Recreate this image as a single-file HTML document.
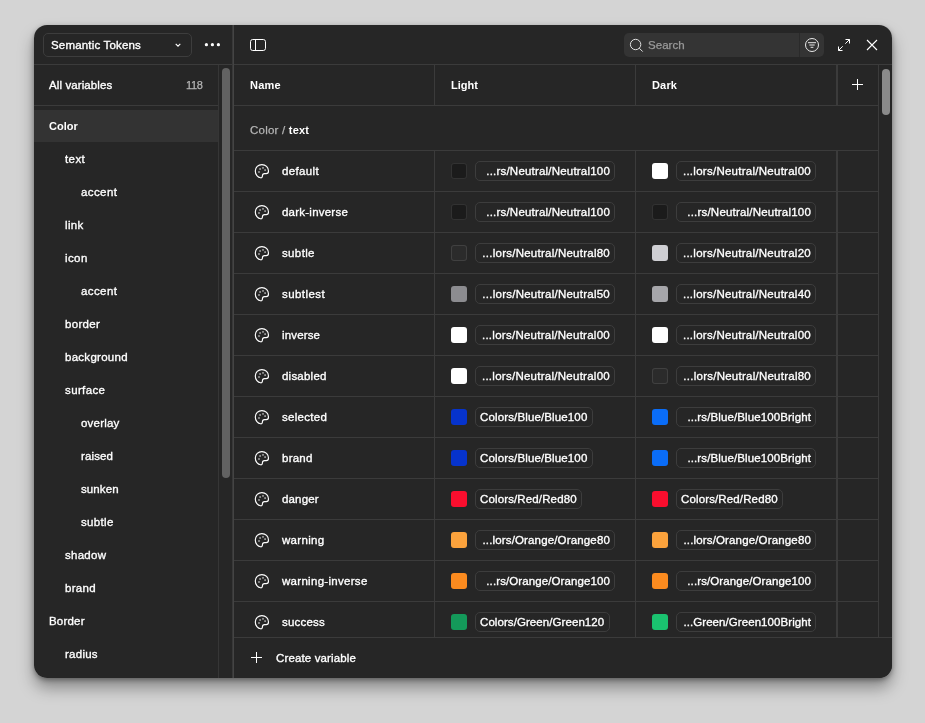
<!DOCTYPE html>
<html lang="en"><head><meta charset="utf-8"><title>Variables</title>
<style>
*{box-sizing:border-box;margin:0;padding:0}
html,body{width:925px;height:723px;overflow:hidden}
body{background:#d4d4d4;font-family:"Liberation Sans",Arial,sans-serif;font-size:11.5px;color:#fff;position:relative;-webkit-font-smoothing:antialiased}
.modal{position:absolute;left:34px;top:25px;width:858px;height:653px;background:#262626;border-radius:13px;overflow:hidden;will-change:transform}
.shadow{position:absolute;left:34px;top:25px;width:858px;height:653px;border-radius:13px;box-shadow:0 2px 5px rgba(0,0,0,.35),0 10px 16px rgba(0,0,0,.35);}
.abs{position:absolute}
.hl{position:absolute;height:1px;background:#3b3b3b}
.vl{position:absolute;width:1px;background:#3b3b3b}
.t{position:absolute;white-space:nowrap;line-height:16px;height:16px}
.m{font-weight:400;-webkit-text-stroke:.33px #fff}
.b{font-weight:700;font-size:11px}
.sel{position:absolute;left:9px;top:8px;width:149px;height:24px;border:1px solid #3d3d3d;border-radius:5px}
.search{position:absolute;left:590px;top:8px;width:200px;height:24px;background:#343434;border-radius:5px}
.srow{position:absolute;left:0;width:184px;height:32px}
.srow.on{background:#333333}
.row{position:absolute;left:200px;width:644px;height:41px;border-bottom:1px solid #3b3b3b}
.pal{position:absolute;left:20px;top:12px}
.sw{position:absolute;top:12px;width:16px;height:16px;border-radius:3px}
.sw.n{box-shadow:inset 0 0 0 1px rgba(255,255,255,.1)}
.chip{position:absolute;top:10px;height:20px;border:1px solid #3d3d3d;border-radius:5px;line-height:18px;white-space:nowrap;overflow:hidden;text-align:right;padding:0 4px 0 0}
.chip.full{text-align:left;padding:0 0 0 4px}
</style></head><body>
<div class="shadow"></div>
<div class="modal">

<div class="sel"></div>
<div class="t m" id="t_sem" style="left:17px;top:12px;letter-spacing:0.173px">Semantic Tokens</div>
<svg class="abs" style="left:140px;top:17px" width="8" height="6" viewBox="0 0 8 6"><path d="M1.700 1.800L4 4.100L6.300 1.800" fill="none" stroke="#fff" stroke-width="1.100"/></svg>
<svg class="abs" style="left:169px;top:17px" width="18" height="6" viewBox="0 0 18 6"><circle cx="3.400" cy="2.700" r="1.600" fill="#fff"/><circle cx="9.400" cy="2.700" r="1.600" fill="#fff"/><circle cx="15.400" cy="2.700" r="1.600" fill="#fff"/></svg>
<svg class="abs" style="left:215px;top:13px" width="18" height="14" viewBox="0 0 18 14"><rect x="1.500" y="1.500" width="15" height="11" rx="2.200" fill="none" stroke="#fff" stroke-width="1"/><path d="M6.500 1.500V12.500" stroke="#fff" stroke-width="1"/></svg>
<div class="search"><div class="vl" style="left:175px;top:0;height:24px;background:#2a2a2a"></div></div>
<svg class="abs" style="left:594px;top:12px" width="16" height="16" viewBox="0 0 16 16"><circle cx="7.600" cy="7.500" r="5.200" fill="none" stroke="#e0e0e0" stroke-width="1"/><path d="M11.300 11.200L14.700 14.600" stroke="#e0e0e0" stroke-width="1"/></svg>
<div class="t" id="t_search" style="left:614px;top:12px;color:#9a9a9a;-webkit-text-stroke:.25px #9a9a9a;letter-spacing:0.033px">Search</div>
<svg class="abs" style="left:770px;top:12px" width="16" height="16" viewBox="0 0 16 16"><circle cx="8" cy="8" r="6.500" fill="none" stroke="#e8e8e8" stroke-width="1"/><path d="M4 5.700H12M5.300 8H10.700M6.600 10.300H9.400" stroke="#e8e8e8" stroke-width="1"/></svg>
<svg class="abs" style="left:802px;top:12px" width="16" height="16" viewBox="0 0 16 16"><path d="M9.500 2.500H13.500V6.500M13.500 2.500L9.300 6.700M6.500 13.500H2.500V9.500M2.500 13.500L6.700 9.300" fill="none" stroke="#fff" stroke-width="1"/></svg>
<svg class="abs" style="left:830px;top:12px" width="16" height="16" viewBox="0 0 16 16"><path d="M3 3L13 13M13 3L3 13" stroke="#fff" stroke-width="1.100"/></svg>
<div class="hl" style="left:0;top:39px;width:858px"></div>
<div class="hl" style="left:0;top:80px;width:184px"></div>
<div class="vl" style="left:184px;top:40px;height:613px;background:#363636"></div>
<div class="vl" style="left:198px;top:0;height:653px;background:#383838"></div>
<div class="vl" style="left:199px;top:0;height:653px;background:#444"></div>
<div class="abs" style="left:188px;top:43px;width:8px;height:410px;border-radius:4px;background:#626262"></div>
<div class="t m" id="t_all" style="left:15px;top:52px;letter-spacing:0.1px">All variables</div>
<div class="t" id="t_118" style="left:152px;top:52px;font-size:11px;color:#b5b5b5;-webkit-text-stroke:.25px #b5b5b5;letter-spacing:-0.373px">118</div>
<div class="srow on" style="top:85px"><div class="t b" id="s0" style="left:15px;top:8px;letter-spacing:0.041px">Color</div></div>
<div class="srow" style="top:118px"><div class="t m" id="s1" style="left:31px;top:8px;letter-spacing:0.418px">text</div></div>
<div class="srow" style="top:151px"><div class="t m" id="s2" style="left:47px;top:8px;letter-spacing:0.402px">accent</div></div>
<div class="srow" style="top:184px"><div class="t m" id="s3" style="left:31px;top:8px;letter-spacing:0.345px">link</div></div>
<div class="srow" style="top:217px"><div class="t m" id="s4" style="left:31px;top:8px;letter-spacing:0.397px">icon</div></div>
<div class="srow" style="top:250px"><div class="t m" id="s5" style="left:47px;top:8px;letter-spacing:0.402px">accent</div></div>
<div class="srow" style="top:283px"><div class="t m" id="s6" style="left:31px;top:8px;letter-spacing:0.33px">border</div></div>
<div class="srow" style="top:316px"><div class="t m" id="s7" style="left:31px;top:8px;letter-spacing:0.277px">background</div></div>
<div class="srow" style="top:349px"><div class="t m" id="s8" style="left:31px;top:8px;letter-spacing:0.38px">surface</div></div>
<div class="srow" style="top:382px"><div class="t m" id="s9" style="left:47px;top:8px;letter-spacing:0.204px">overlay</div></div>
<div class="srow" style="top:415px"><div class="t m" id="s10" style="left:47px;top:8px;letter-spacing:0.134px">raised</div></div>
<div class="srow" style="top:448px"><div class="t m" id="s11" style="left:47px;top:8px;letter-spacing:0.101px">sunken</div></div>
<div class="srow" style="top:481px"><div class="t m" id="s12" style="left:47px;top:8px;letter-spacing:0.342px">subtle</div></div>
<div class="srow" style="top:514px"><div class="t m" id="s13" style="left:31px;top:8px;letter-spacing:0.272px">shadow</div></div>
<div class="srow" style="top:547px"><div class="t m" id="s14" style="left:31px;top:8px;letter-spacing:0.32px">brand</div></div>
<div class="srow" style="top:580px"><div class="t m" id="s15" style="left:15px;top:8px;letter-spacing:0.194px">Border</div></div>
<div class="srow" style="top:613px"><div class="t m" id="s16" style="left:31px;top:8px;letter-spacing:0.254px">radius</div></div>
<div class="hl" style="left:200px;top:80px;width:644px"></div>
<div class="t b" id="t_name" style="left:216px;top:52px;letter-spacing:0.244px">Name</div>
<div class="t b" id="t_light" style="left:417px;top:52px;letter-spacing:0.027px">Light</div>
<div class="t b" id="t_dark" style="left:618px;top:52px;letter-spacing:0.177px">Dark</div>
<svg class="abs" style="left:816px;top:52px" width="16" height="16" viewBox="0 0 16 16"><path d="M2 7.500H13M7.500 2V13" stroke="#fff" stroke-width="1"/></svg>
<div class="hl" style="left:200px;top:125px;width:644px"></div>
<div class="t" id="t_grp" style="left:216px;top:97px;letter-spacing:0.214px"><span style="color:#b5b5b5;-webkit-text-stroke:.25px #b5b5b5">Color / </span><span class="b">text</span></div>
<div class="row" style="top:126px"><svg class="pal" width="16" height="16" viewBox="0 0 16 16"><path d="M7.900 1.600C4.200 1.600 1.300 4.400 1.300 8c0 3.600 2.500 6.700 5.300 6.800 1.200.05 1.800-.8 1.800-1.800 0-1.500.8-2.400 2.100-2.400h1.700c1.400 0 2.300-1.100 2.300-2.600C14.500 4.400 11.600 1.600 7.900 1.600Z" fill="none" stroke="#fff" stroke-width="1.150"/><rect x="5.300" y="5.200" width="1.600" height="1.600" fill="#b0b0b0"/><rect x="8.200" y="4.100" width="1.600" height="1.600" fill="#b0b0b0"/><rect x="10.300" y="6.300" width="1.600" height="1.600" fill="#b0b0b0"/><rect x="4.200" y="8.200" width="1.600" height="1.600" fill="#b0b0b0"/></svg><div class="t m" id="r0" style="left:48px;top:12px;letter-spacing:0.361px">default</div>
<div class="sw n" style="left:217px;background:#1b1b1b"></div><div class="chip m" id="c0_0" style="left:241px;width:140px;letter-spacing:0.2px"><span>...rs/Neutral/Neutral100</span></div>
<div class="sw" style="left:418px;background:#ffffff"></div><div class="chip m" id="c0_1" style="left:442px;width:140px;letter-spacing:0.264px"><span>...lors/Neutral/Neutral00</span></div>
</div>
<div class="row" style="top:167px"><svg class="pal" width="16" height="16" viewBox="0 0 16 16"><path d="M7.900 1.600C4.200 1.600 1.300 4.400 1.300 8c0 3.600 2.500 6.700 5.300 6.800 1.200.05 1.800-.8 1.800-1.800 0-1.500.8-2.400 2.100-2.400h1.700c1.400 0 2.300-1.100 2.300-2.600C14.500 4.400 11.600 1.600 7.900 1.600Z" fill="none" stroke="#fff" stroke-width="1.150"/><rect x="5.300" y="5.200" width="1.600" height="1.600" fill="#b0b0b0"/><rect x="8.200" y="4.100" width="1.600" height="1.600" fill="#b0b0b0"/><rect x="10.300" y="6.300" width="1.600" height="1.600" fill="#b0b0b0"/><rect x="4.200" y="8.200" width="1.600" height="1.600" fill="#b0b0b0"/></svg><div class="t m" id="r1" style="left:48px;top:12px;letter-spacing:0.229px">dark-inverse</div>
<div class="sw n" style="left:217px;background:#1b1b1b"></div><div class="chip m" id="c1_0" style="left:241px;width:140px;letter-spacing:0.2px"><span>...rs/Neutral/Neutral100</span></div>
<div class="sw n" style="left:418px;background:#1b1b1b"></div><div class="chip m" id="c1_1" style="left:442px;width:140px;letter-spacing:0.2px"><span>...rs/Neutral/Neutral100</span></div>
</div>
<div class="row" style="top:208px"><svg class="pal" width="16" height="16" viewBox="0 0 16 16"><path d="M7.900 1.600C4.200 1.600 1.300 4.400 1.300 8c0 3.600 2.500 6.700 5.300 6.800 1.200.05 1.800-.8 1.800-1.800 0-1.500.8-2.400 2.100-2.400h1.700c1.400 0 2.300-1.100 2.300-2.600C14.500 4.400 11.600 1.600 7.900 1.600Z" fill="none" stroke="#fff" stroke-width="1.150"/><rect x="5.300" y="5.200" width="1.600" height="1.600" fill="#b0b0b0"/><rect x="8.200" y="4.100" width="1.600" height="1.600" fill="#b0b0b0"/><rect x="10.300" y="6.300" width="1.600" height="1.600" fill="#b0b0b0"/><rect x="4.200" y="8.200" width="1.600" height="1.600" fill="#b0b0b0"/></svg><div class="t m" id="r2" style="left:48px;top:12px;letter-spacing:0.362px">subtle</div>
<div class="sw n" style="left:217px;background:#2b2b2b"></div><div class="chip m" id="c2_0" style="left:241px;width:140px;letter-spacing:0.248px"><span>...lors/Neutral/Neutral80</span></div>
<div class="sw" style="left:418px;background:#cfcfd3"></div><div class="chip m" id="c2_1" style="left:442px;width:140px;letter-spacing:0.264px"><span>...lors/Neutral/Neutral20</span></div>
</div>
<div class="row" style="top:249px"><svg class="pal" width="16" height="16" viewBox="0 0 16 16"><path d="M7.900 1.600C4.200 1.600 1.300 4.400 1.300 8c0 3.600 2.500 6.700 5.300 6.800 1.200.05 1.800-.8 1.800-1.800 0-1.500.8-2.400 2.100-2.400h1.700c1.400 0 2.300-1.100 2.300-2.600C14.500 4.400 11.600 1.600 7.900 1.600Z" fill="none" stroke="#fff" stroke-width="1.150"/><rect x="5.300" y="5.200" width="1.600" height="1.600" fill="#b0b0b0"/><rect x="8.200" y="4.100" width="1.600" height="1.600" fill="#b0b0b0"/><rect x="10.300" y="6.300" width="1.600" height="1.600" fill="#b0b0b0"/><rect x="4.200" y="8.200" width="1.600" height="1.600" fill="#b0b0b0"/></svg><div class="t m" id="r3" style="left:48px;top:12px;letter-spacing:0.437px">subtlest</div>
<div class="sw" style="left:217px;background:#8c8c90"></div><div class="chip m" id="c3_0" style="left:241px;width:140px;letter-spacing:0.248px"><span>...lors/Neutral/Neutral50</span></div>
<div class="sw" style="left:418px;background:#a6a6aa"></div><div class="chip m" id="c3_1" style="left:442px;width:140px;letter-spacing:0.264px"><span>...lors/Neutral/Neutral40</span></div>
</div>
<div class="row" style="top:290px"><svg class="pal" width="16" height="16" viewBox="0 0 16 16"><path d="M7.900 1.600C4.200 1.600 1.300 4.400 1.300 8c0 3.600 2.500 6.700 5.300 6.800 1.200.05 1.800-.8 1.800-1.800 0-1.500.8-2.400 2.100-2.400h1.700c1.400 0 2.300-1.100 2.300-2.600C14.500 4.400 11.600 1.600 7.900 1.600Z" fill="none" stroke="#fff" stroke-width="1.150"/><rect x="5.300" y="5.200" width="1.600" height="1.600" fill="#b0b0b0"/><rect x="8.200" y="4.100" width="1.600" height="1.600" fill="#b0b0b0"/><rect x="10.300" y="6.300" width="1.600" height="1.600" fill="#b0b0b0"/><rect x="4.200" y="8.200" width="1.600" height="1.600" fill="#b0b0b0"/></svg><div class="t m" id="r4" style="left:48px;top:12px;letter-spacing:0.154px">inverse</div>
<div class="sw" style="left:217px;background:#ffffff"></div><div class="chip m" id="c4_0" style="left:241px;width:140px;letter-spacing:0.264px"><span>...lors/Neutral/Neutral00</span></div>
<div class="sw" style="left:418px;background:#ffffff"></div><div class="chip m" id="c4_1" style="left:442px;width:140px;letter-spacing:0.264px"><span>...lors/Neutral/Neutral00</span></div>
</div>
<div class="row" style="top:331px"><svg class="pal" width="16" height="16" viewBox="0 0 16 16"><path d="M7.900 1.600C4.200 1.600 1.300 4.400 1.300 8c0 3.600 2.500 6.700 5.300 6.800 1.200.05 1.800-.8 1.800-1.800 0-1.500.8-2.400 2.100-2.400h1.700c1.400 0 2.300-1.100 2.300-2.600C14.500 4.400 11.600 1.600 7.900 1.600Z" fill="none" stroke="#fff" stroke-width="1.150"/><rect x="5.300" y="5.200" width="1.600" height="1.600" fill="#b0b0b0"/><rect x="8.200" y="4.100" width="1.600" height="1.600" fill="#b0b0b0"/><rect x="10.300" y="6.300" width="1.600" height="1.600" fill="#b0b0b0"/><rect x="4.200" y="8.200" width="1.600" height="1.600" fill="#b0b0b0"/></svg><div class="t m" id="r5" style="left:48px;top:12px;letter-spacing:0.222px">disabled</div>
<div class="sw" style="left:217px;background:#ffffff"></div><div class="chip m" id="c5_0" style="left:241px;width:140px;letter-spacing:0.264px"><span>...lors/Neutral/Neutral00</span></div>
<div class="sw n" style="left:418px;background:#2b2b2b"></div><div class="chip m" id="c5_1" style="left:442px;width:140px;letter-spacing:0.248px"><span>...lors/Neutral/Neutral80</span></div>
</div>
<div class="row" style="top:372px"><svg class="pal" width="16" height="16" viewBox="0 0 16 16"><path d="M7.900 1.600C4.200 1.600 1.300 4.400 1.300 8c0 3.600 2.500 6.700 5.300 6.800 1.200.05 1.800-.8 1.800-1.800 0-1.500.8-2.400 2.100-2.400h1.700c1.400 0 2.300-1.100 2.300-2.600C14.500 4.400 11.600 1.600 7.900 1.600Z" fill="none" stroke="#fff" stroke-width="1.150"/><rect x="5.300" y="5.200" width="1.600" height="1.600" fill="#b0b0b0"/><rect x="8.200" y="4.100" width="1.600" height="1.600" fill="#b0b0b0"/><rect x="10.300" y="6.300" width="1.600" height="1.600" fill="#b0b0b0"/><rect x="4.200" y="8.200" width="1.600" height="1.600" fill="#b0b0b0"/></svg><div class="t m" id="r6" style="left:48px;top:12px;letter-spacing:0.279px">selected</div>
<div class="sw" style="left:217px;background:#0633cc"></div><div class="chip m full" id="c6_0" style="left:241px;width:118px;letter-spacing:0.136px"><span>Colors/Blue/Blue100</span></div>
<div class="sw" style="left:418px;background:#0a6df8"></div><div class="chip m" id="c6_1" style="left:442px;width:140px;letter-spacing:0.116px"><span>...rs/Blue/Blue100Bright</span></div>
</div>
<div class="row" style="top:413px"><svg class="pal" width="16" height="16" viewBox="0 0 16 16"><path d="M7.900 1.600C4.200 1.600 1.300 4.400 1.300 8c0 3.600 2.500 6.700 5.300 6.800 1.200.05 1.800-.8 1.800-1.800 0-1.500.8-2.400 2.100-2.400h1.700c1.400 0 2.300-1.100 2.300-2.600C14.500 4.400 11.600 1.600 7.900 1.600Z" fill="none" stroke="#fff" stroke-width="1.150"/><rect x="5.300" y="5.200" width="1.600" height="1.600" fill="#b0b0b0"/><rect x="8.200" y="4.100" width="1.600" height="1.600" fill="#b0b0b0"/><rect x="10.300" y="6.300" width="1.600" height="1.600" fill="#b0b0b0"/><rect x="4.200" y="8.200" width="1.600" height="1.600" fill="#b0b0b0"/></svg><div class="t m" id="r7" style="left:48px;top:12px;letter-spacing:0.245px">brand</div>
<div class="sw" style="left:217px;background:#0633cc"></div><div class="chip m full" id="c7_0" style="left:241px;width:118px;letter-spacing:0.136px"><span>Colors/Blue/Blue100</span></div>
<div class="sw" style="left:418px;background:#0a6df8"></div><div class="chip m" id="c7_1" style="left:442px;width:140px;letter-spacing:0.116px"><span>...rs/Blue/Blue100Bright</span></div>
</div>
<div class="row" style="top:454px"><svg class="pal" width="16" height="16" viewBox="0 0 16 16"><path d="M7.900 1.600C4.200 1.600 1.300 4.400 1.300 8c0 3.600 2.500 6.700 5.300 6.800 1.200.05 1.800-.8 1.800-1.800 0-1.500.8-2.400 2.100-2.400h1.700c1.400 0 2.300-1.100 2.300-2.600C14.500 4.400 11.600 1.600 7.900 1.600Z" fill="none" stroke="#fff" stroke-width="1.150"/><rect x="5.300" y="5.200" width="1.600" height="1.600" fill="#b0b0b0"/><rect x="8.200" y="4.100" width="1.600" height="1.600" fill="#b0b0b0"/><rect x="10.300" y="6.300" width="1.600" height="1.600" fill="#b0b0b0"/><rect x="4.200" y="8.200" width="1.600" height="1.600" fill="#b0b0b0"/></svg><div class="t m" id="r8" style="left:48px;top:12px;letter-spacing:0.158px">danger</div>
<div class="sw" style="left:217px;background:#fa0e2e"></div><div class="chip m full" id="c8_0" style="left:241px;width:107px;letter-spacing:0.133px"><span>Colors/Red/Red80</span></div>
<div class="sw" style="left:418px;background:#fa0e2e"></div><div class="chip m full" id="c8_1" style="left:442px;width:107px;letter-spacing:0.133px"><span>Colors/Red/Red80</span></div>
</div>
<div class="row" style="top:495px"><svg class="pal" width="16" height="16" viewBox="0 0 16 16"><path d="M7.900 1.600C4.200 1.600 1.300 4.400 1.300 8c0 3.600 2.500 6.700 5.300 6.800 1.200.05 1.800-.8 1.800-1.800 0-1.500.8-2.400 2.100-2.400h1.700c1.400 0 2.300-1.100 2.300-2.600C14.500 4.400 11.600 1.600 7.900 1.600Z" fill="none" stroke="#fff" stroke-width="1.150"/><rect x="5.300" y="5.200" width="1.600" height="1.600" fill="#b0b0b0"/><rect x="8.200" y="4.100" width="1.600" height="1.600" fill="#b0b0b0"/><rect x="10.300" y="6.300" width="1.600" height="1.600" fill="#b0b0b0"/><rect x="4.200" y="8.200" width="1.600" height="1.600" fill="#b0b0b0"/></svg><div class="t m" id="r9" style="left:48px;top:12px;letter-spacing:0.303px">warning</div>
<div class="sw" style="left:217px;background:#fba23c"></div><div class="chip m" id="c9_0" style="left:241px;width:140px;letter-spacing:0.154px"><span>...lors/Orange/Orange80</span></div>
<div class="sw" style="left:418px;background:#fba23c"></div><div class="chip m" id="c9_1" style="left:442px;width:140px;letter-spacing:0.154px"><span>...lors/Orange/Orange80</span></div>
</div>
<div class="row" style="top:536px"><svg class="pal" width="16" height="16" viewBox="0 0 16 16"><path d="M7.900 1.600C4.200 1.600 1.300 4.400 1.300 8c0 3.600 2.500 6.700 5.300 6.800 1.200.05 1.800-.8 1.800-1.800 0-1.500.8-2.400 2.100-2.400h1.700c1.400 0 2.300-1.100 2.300-2.600C14.500 4.400 11.600 1.600 7.900 1.600Z" fill="none" stroke="#fff" stroke-width="1.150"/><rect x="5.300" y="5.200" width="1.600" height="1.600" fill="#b0b0b0"/><rect x="8.200" y="4.100" width="1.600" height="1.600" fill="#b0b0b0"/><rect x="10.300" y="6.300" width="1.600" height="1.600" fill="#b0b0b0"/><rect x="4.200" y="8.200" width="1.600" height="1.600" fill="#b0b0b0"/></svg><div class="t m" id="r10" style="left:48px;top:12px;letter-spacing:0.294px">warning-inverse</div>
<div class="sw" style="left:217px;background:#fb8b1f"></div><div class="chip m" id="c10_0" style="left:241px;width:140px;letter-spacing:0.101px"><span>...rs/Orange/Orange100</span></div>
<div class="sw" style="left:418px;background:#fb8b1f"></div><div class="chip m" id="c10_1" style="left:442px;width:140px;letter-spacing:0.101px"><span>...rs/Orange/Orange100</span></div>
</div>
<div class="row" style="top:577px"><svg class="pal" width="16" height="16" viewBox="0 0 16 16"><path d="M7.900 1.600C4.200 1.600 1.300 4.400 1.300 8c0 3.600 2.500 6.700 5.300 6.800 1.200.05 1.800-.8 1.800-1.800 0-1.500.8-2.400 2.100-2.400h1.700c1.400 0 2.300-1.100 2.300-2.600C14.500 4.400 11.600 1.600 7.900 1.600Z" fill="none" stroke="#fff" stroke-width="1.150"/><rect x="5.300" y="5.200" width="1.600" height="1.600" fill="#b0b0b0"/><rect x="8.200" y="4.100" width="1.600" height="1.600" fill="#b0b0b0"/><rect x="10.300" y="6.300" width="1.600" height="1.600" fill="#b0b0b0"/><rect x="4.200" y="8.200" width="1.600" height="1.600" fill="#b0b0b0"/></svg><div class="t m" id="r11" style="left:48px;top:12px;letter-spacing:0.209px">success</div>
<div class="sw" style="left:217px;background:#14995a"></div><div class="chip m full" id="c11_0" style="left:241px;width:135px;letter-spacing:0.073px"><span>Colors/Green/Green120</span></div>
<div class="sw" style="left:418px;background:#1ac26f"></div><div class="chip m" id="c11_1" style="left:442px;width:140px;letter-spacing:0.071px"><span>...Green/Green100Bright</span></div>
</div>
<div class="vl" style="left:400px;top:40px;height:41px"></div>
<div class="vl" style="left:601px;top:40px;height:41px"></div>
<div class="vl" style="left:400px;top:126px;height:486px"></div>
<div class="vl" style="left:601px;top:126px;height:486px"></div>
<div class="vl" style="left:802px;top:40px;height:40px;width:2px"></div>
<div class="vl" style="left:802px;top:126px;height:486px;width:2px"></div>
<div class="vl" style="left:844px;top:40px;height:572px"></div>
<div class="abs" style="left:848px;top:44px;width:8px;height:46px;border-radius:4px;background:#8a8a8a"></div>
<div class="abs" style="left:200px;top:612px;width:658px;height:41px;background:#262626;border-top:1px solid #3b3b3b"></div>
<svg class="abs" style="left:215px;top:625px" width="16" height="16" viewBox="0 0 16 16"><path d="M2 7.500H13M7.500 2V13" stroke="#fff" stroke-width="1"/></svg>
<div class="t m" id="t_create" style="left:242px;top:625px;letter-spacing:0.137px">Create variable</div>
</div></body></html>
